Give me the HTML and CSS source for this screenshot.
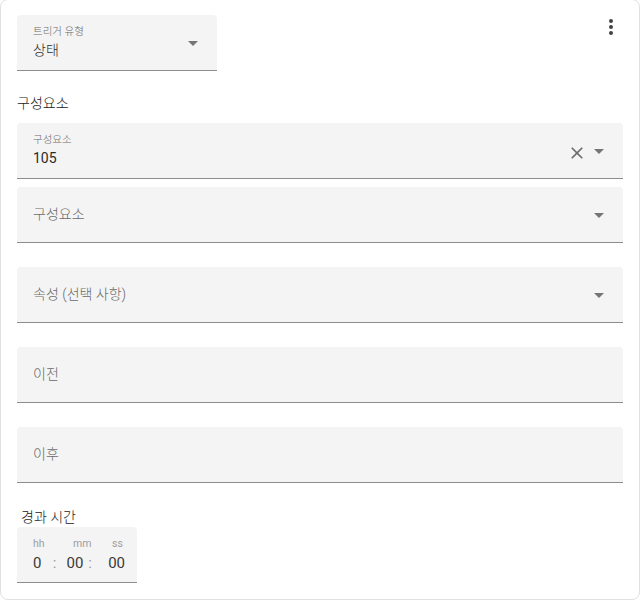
FILE: index.html
```html
<!DOCTYPE html>
<html lang="ko">
<head>
<meta charset="utf-8">
<title>트리거</title>
<link rel="stylesheet" href="styles.css">
</head>
<body>
<div class="card">
  <button class="menu-btn" aria-label="menu">
    <svg viewBox="0 0 24 24" width="24" height="24"><path d="M12,16A2,2 0 0,1 14,18A2,2 0 0,1 12,20A2,2 0 0,1 10,18A2,2 0 0,1 12,16M12,10A2,2 0 0,1 14,12A2,2 0 0,1 12,14A2,2 0 0,1 10,12A2,2 0 0,1 12,10M12,4A2,2 0 0,1 14,6A2,2 0 0,1 12,8A2,2 0 0,1 10,6A2,2 0 0,1 12,4Z"/></svg>
  </button>

  <div class="field trigger">
    <div class="field-text">
      <span class="flabel ko">트리거 유형</span>
      <span class="fvalue ko">상태</span>
    </div>
    <svg class="icon arrow" viewBox="0 0 24 24" width="24" height="24"><path d="M7,10L12,15L17,10H7Z"/></svg>
  </div>

  <div class="section-title ko">구성요소</div>

  <div class="field">
    <div class="field-text">
      <span class="flabel ko">구성요소</span>
      <span class="fvalue">105</span>
    </div>
    <svg class="icon clear" viewBox="0 0 24 24" width="20" height="20"><path d="M19,6.41L17.59,5L12,10.59L6.41,5L5,6.41L10.59,12L5,17.59L6.41,19L12,13.41L17.59,19L19,17.59L13.41,12L19,6.41Z"/></svg>
    <svg class="icon arrow" viewBox="0 0 24 24" width="24" height="24"><path d="M7,10L12,15L17,10H7Z"/></svg>
  </div>

  <div class="field gap-sm">
    <div class="field-text"><span class="placeholder ko">구성요소</span></div>
    <svg class="icon arrow" viewBox="0 0 24 24" width="24" height="24"><path d="M7,10L12,15L17,10H7Z"/></svg>
  </div>

  <div class="field gap-lg">
    <div class="field-text"><span class="placeholder ko">속성 (선택 사항)</span></div>
    <svg class="icon arrow" viewBox="0 0 24 24" width="24" height="24"><path d="M7,10L12,15L17,10H7Z"/></svg>
  </div>

  <div class="field gap-lg">
    <div class="field-text"><span class="placeholder ko">이전</span></div>
  </div>

  <div class="field gap-lg">
    <div class="field-text"><span class="placeholder ko">이후</span></div>
  </div>

  <div class="dur-title ko">경과 시간</div>
  <div class="duration">
    <div class="dur-labels">
      <span class="dl-h">hh</span>
      <span class="dl-m">mm</span>
      <span class="dl-s">ss</span>
    </div>
    <div class="dur-values">
      <span class="dv-h">0</span>
      <span class="colon">:</span>
      <span class="dv-m">00</span>
      <span class="colon">:</span>
      <span class="dv-s">00</span>
    </div>
  </div>
</div>
</body>
</html>
```

FILE: styles.css
```css
* { box-sizing: border-box; }

html, body {
  margin: 0;
  padding: 0;
  background: #ffffff;
}

body {
  font-family: Roboto, "Noto Sans CJK KR", sans-serif;
  color: #212121;
}

.ko { font-weight: 300; }

.card {
  position: relative;
  width: 640px;
  margin-top: -1px;
  padding: 15px 16px 16px;
  border: 1px solid #e0e0e0;
  border-radius: 8px;
  background: #fff;
}

.menu-btn {
  position: absolute;
  top: 15px;
  right: 16px;
  width: 24px;
  height: 24px;
  padding: 0;
  border: 0;
  background: none;
  display: block;
}
.menu-btn svg { display: block; fill: #424242; }

.field {
  display: flex;
  align-items: center;
  height: 56px;
  padding: 0 12px 0 16px;
  background: #f4f4f4;
  border-bottom: 1px solid #8d8d8d;
  border-radius: 4px 4px 0 0;
}
.field.trigger { width: 200px; }
.gap-sm { margin-top: 8px; }
.gap-lg { margin-top: 24px; }

.field-text {
  flex: 1;
  display: flex;
  flex-direction: column;
  align-self: stretch;
  justify-content: center;
  padding-bottom: 2px;
}
.field-text:has(.flabel) {
  justify-content: flex-start;
  padding-top: 9px;
  padding-bottom: 0;
}

.flabel {
  font-size: 10.5px;
  line-height: 16px;
  color: #6b6b6b;
}
.fvalue {
  font-size: 14px;
  line-height: 20px;
  color: #2a2a2a;
}
.placeholder {
  font-size: 14px;
  line-height: 20px;
  color: #6b6b6b;
}

.icon { display: block; fill: #757575; flex: none; }
.icon.clear { fill: #6e6e6e; margin-top: 4px; }

.section-title {
  margin: 22px 0 10px;
  font-size: 14px;
  line-height: 20px;
  color: #212121;
}

.dur-title {
  margin: 26px 0 2px 4px;
  font-size: 14px;
  line-height: 16px;
  color: #212121;
}

.duration {
  width: 120px;
  height: 56px;
  padding: 10px 12px 0 16px;
  background: #f4f4f4;
  border-bottom: 1px solid #8d8d8d;
  border-radius: 4px 4px 0 0;
}
.dur-labels {
  display: flex;
  font-size: 10.5px;
  line-height: 14px;
  color: #9e9e9e;
}
.dl-h { width: 40px; }
.dl-m { width: 39px; }

.dur-values {
  display: flex;
  margin-top: 3px;
  font-size: 15px;
  line-height: 18px;
  color: #3a3a3a;
}
.dv-h { width: 20px; }
.colon { width: 4px; text-align: center; color: #9a9a9a; }
.dv-m { width: 22px; margin-left: 10px; }
.dv-s { margin-left: 16px; }
```
